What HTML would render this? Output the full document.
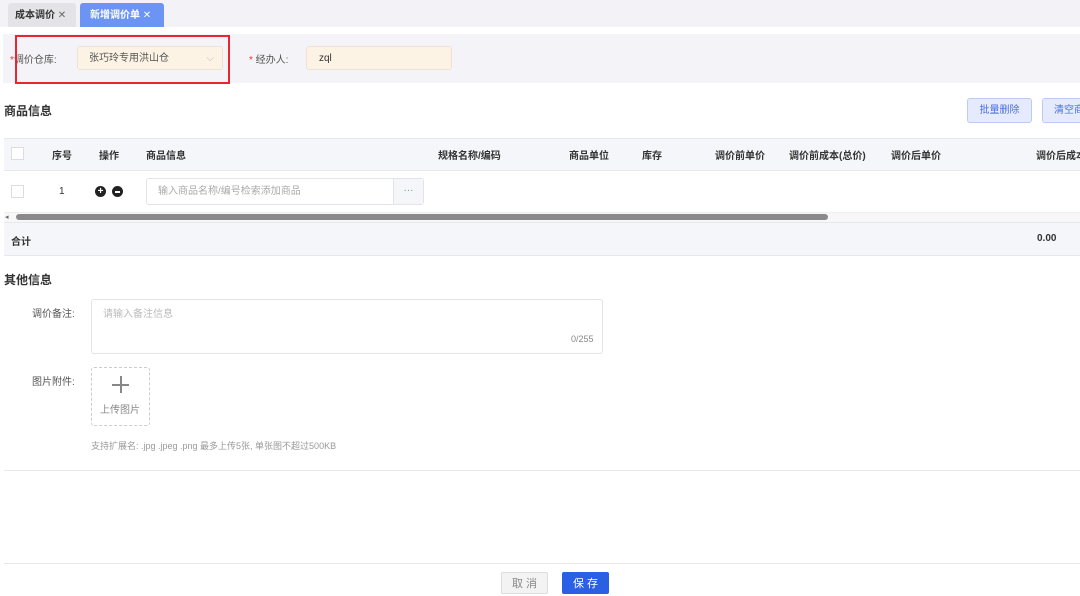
<!DOCTYPE html><html><head><meta charset="utf-8"><style>
*{box-sizing:border-box;margin:0;padding:0}
body{width:1080px;height:589px;overflow:hidden;background:#fff;font-family:"Liberation Sans","Noto Sans CJK SC",sans-serif;font-size:10px;color:#333;position:relative}
.a{position:absolute;white-space:nowrap}
.b{font-weight:bold}
</style></head><body>
<div class="a" style="left:0;top:0;width:1080px;height:27px;background:#f3f3f7"></div>
<div class="a b" style="left:8px;top:3px;width:68px;height:24px;background:#e4e4e8;border-radius:3px 3px 0 0;line-height:26px;padding-left:7px;color:#333">成本调价 <span style="font-weight:normal;color:#666">✕</span></div>
<div class="a b" style="left:80px;top:3px;width:84px;height:24px;background:#6b94f5;border-radius:3px 3px 0 0;line-height:26px;padding-left:10px;color:#fff">新增调价单 <span style="font-weight:normal">✕</span></div>
<div class="a" style="left:3px;top:34px;width:1077px;height:49px;background:#f4f4f8"></div>
<div class="a" style="left:10px;top:51px;color:#e33">*<span style="color:#555">调价仓库:</span></div>
<div class="a" style="left:77px;top:46px;width:146px;height:24px;background:#fdf3e5;border:1px solid #eee3d3;border-radius:3px;line-height:24px;padding-left:11px;color:#555">张巧玲专用洪山仓<span style="position:absolute;right:8px;color:#bbb">⌵</span></div>
<div class="a" style="left:15px;top:35px;width:215px;height:49px;border:2px solid #e82530"></div>
<div class="a" style="left:249px;top:51px;color:#e33">* <span style="color:#555">经办人:</span></div>
<div class="a" style="left:306px;top:46px;width:146px;height:24px;background:#fdf3e5;border:1px solid #eee3d3;border-radius:3px;line-height:24px;padding-left:12px;color:#333">zql</div>
<div class="a b" style="left:4px;top:102px;font-size:12px">商品信息</div>
<div class="a" style="left:967px;top:98px;width:65px;height:25px;background:#e5ebfd;border:1px solid #bccbf5;border-radius:3px;text-align:center;line-height:24px;color:#4a6fdc">批量删除</div>
<div class="a" style="left:1042px;top:98px;width:60px;height:25px;background:#e5ebfd;border:1px solid #bccbf5;border-radius:3px;line-height:24px;padding-left:11px;color:#4a6fdc">清空商品</div>
<div class="a" style="left:4px;top:138px;width:1076px;height:33px;background:#f5f6f9;border-top:1px solid #e6e8ee;border-bottom:1px solid #e6e8ee"></div>
<div class="a" style="left:11px;top:147px;width:13px;height:13px;border:1px solid #ddd;background:#fff"></div>
<div class="a b" style="left:52px;top:147px">序号</div><div class="a b" style="left:99px;top:147px">操作</div><div class="a b" style="left:146px;top:147px">商品信息</div>
<div class="a b" style="left:438px;top:147px">规格名称/编码</div><div class="a b" style="left:569px;top:147px">商品单位</div><div class="a b" style="left:642px;top:147px">库存</div>
<div class="a b" style="left:715px;top:147px">调价前单价</div><div class="a b" style="left:789px;top:147px">调价前成本(总价)</div><div class="a b" style="left:891px;top:147px">调价后单价</div><div class="a b" style="left:1036px;top:147px">调价后成本</div>
<div class="a" style="left:11px;top:185px;width:13px;height:13px;border:1px solid #ddd"></div>
<div class="a" style="left:59px;top:186px">1</div>
<div class="a" style="left:95px;top:186px;width:11px;height:11px;border-radius:50%;background:#222;color:#fff;font-size:10px;line-height:11px;text-align:center;font-weight:bold">+</div>
<div class="a" style="left:112px;top:186px;width:11px;height:11px;border-radius:50%;background:#222"><div style="position:absolute;left:3px;top:5px;width:5px;height:1.5px;background:#fff"></div></div>
<div class="a" style="left:146px;top:178px;width:278px;height:27px;border:1px solid #e2e4ea;border-radius:3px;line-height:26px;padding-left:11px;color:#aaa">输入商品名称/编号检索添加商品</div>
<div class="a" style="left:393px;top:179px;width:30px;height:25px;background:#f5f6f9;border-left:1px solid #e2e4ea;text-align:center;line-height:24px;color:#888">···</div>
<div class="a" style="left:4px;top:212px;width:1076px;height:10px;background:#f7f7f7;border-top:1px solid #eee"></div>
<div class="a" style="left:5px;top:213px;font-size:7px;color:#666">◂</div>
<div class="a" style="left:16px;top:214px;width:812px;height:6px;background:#8a8a8a;border-radius:3px"></div>
<div class="a" style="left:4px;top:222px;width:1076px;height:34px;background:#f5f6f9;border-top:1px solid #e6e8ee;border-bottom:1px solid #e6e8ee"></div>
<div class="a b" style="left:11px;top:233px">合计</div><div class="a b" style="left:1037px;top:233px">0.00</div>
<div class="a b" style="left:4px;top:271px;font-size:12px">其他信息</div>
<div class="a" style="left:32px;top:305px;color:#555">调价备注:</div>
<div class="a" style="left:91px;top:299px;width:512px;height:55px;border:1px solid #e2e4ea;border-radius:3px"></div>
<div class="a" style="left:103px;top:305px;color:#bbb">请输入备注信息</div>
<div class="a" style="left:571px;top:334px;color:#888;font-size:9px">0/255</div>
<div class="a" style="left:32px;top:373px;color:#555">图片附件:</div>
<div class="a" style="left:91px;top:367px;width:59px;height:59px;border:1px dashed #ccc;border-radius:3px"></div>
<div class="a" style="left:112px;top:377px;width:17px;height:1.5px;background:#888;top:384px"></div>
<div class="a" style="left:120px;top:376px;width:1.5px;height:17px;background:#888"></div>
<div class="a" style="left:100px;top:401px;color:#888">上传图片</div>
<div class="a" style="left:91px;top:439px;font-size:9px;color:#999">支持扩展名: .jpg .jpeg .png 最多上传5张, 单张图不超过500KB</div>
<div class="a" style="left:4px;top:470px;width:1076px;height:1px;background:#e8e8e8"></div>
<div class="a" style="left:4px;top:563px;width:1076px;height:1px;background:#e8e8e8"></div>
<div class="a" style="left:501px;top:572px;width:47px;height:22px;background:#f3f3f3;border:1px solid #ddd;border-radius:2px;text-align:center;line-height:22px;color:#888;font-size:11px">取 消</div>
<div class="a" style="left:562px;top:572px;width:47px;height:22px;background:#2b5fe6;border-radius:2px;text-align:center;line-height:24px;color:#fff;font-size:11px">保 存</div>
</body></html>
